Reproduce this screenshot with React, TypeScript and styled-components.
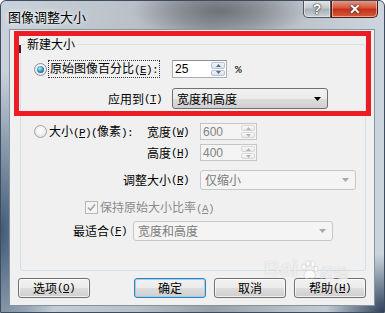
import React from 'react';
import styled, { createGlobalStyle } from 'styled-components';

const Global = createGlobalStyle`
  html, body { margin: 0; padding: 0; background: #fff; }
  body {
    font-family: "Noto Sans CJK SC", "Liberation Sans", sans-serif;
    font-size: 12px;
    color: #000;
  }
`;

const Window = styled.div`
  width: 385px;
  height: 313px;
  box-sizing: border-box;
  display: flex;
  flex-direction: column;
  border: 1px solid #3e4d5e;
  border-radius: 6px 6px 0 0;
  overflow: hidden;
  background:
    radial-gradient(ellipse 90px 26px at 220px 10px, rgba(95, 98, 104, 0.75), transparent),
    radial-gradient(ellipse 60px 160px at 0px 230px, rgba(30, 60, 95, 0.8), transparent),
    radial-gradient(ellipse 60px 60px at 385px 313px, rgba(20, 40, 70, 0.9), transparent),
    linear-gradient(90deg, #c9d2db 0%, #b9c0c8 35%, #9aa0a8 55%, #bcc3ca 78%, #cdd6df 100%);
`;

const TitleBar = styled.div`
  height: 28px;
  display: flex;
  align-items: flex-start;
  padding-left: 7px;
`;

const Title = styled.div`
  padding-top: 7px;
  font-size: 13px;
  line-height: 17px;
  text-shadow: 0 0 6px rgba(255, 255, 255, 0.95), 0 0 3px rgba(255, 255, 255, 0.9);
`;

const Captions = styled.div`
  margin-left: auto;
  margin-right: 6px;
  display: flex;
  margin-top: -1px;
`;

const CaptionButton = styled.div<{ $kind: 'help' | 'close' }>`
  height: 18px;
  width: ${p => (p.$kind === 'close' ? 47 : 28)}px;
  box-sizing: border-box;
  display: flex;
  align-items: center;
  justify-content: center;
  border: 1px solid ${p => (p.$kind === 'close' ? '#5a1a12' : '#4a5560')};
  border-top: none;
  border-radius: ${p => (p.$kind === 'close' ? '0 0 5px 0' : '0 0 0 5px')};
  box-shadow: inset 0 0 0 1px rgba(255, 255, 255, 0.45);
  background: ${p =>
    p.$kind === 'close'
      ? 'linear-gradient(#e8a08e 0%, #d7573c 45%, #c4321a 55%, #d65a3c 100%)'
      : 'linear-gradient(#e6eaee 0%, #c3c9cf 45%, #a8b0b8 55%, #c9d0d6 100%)'};
  color: #fff;
  font-family: "Liberation Sans", sans-serif;
  font-weight: bold;
  font-size: 14px;
  text-shadow: 0 0 2px #222, 0 0 1px #000;
`;

const Client = styled.div`
  flex: 1;
  margin: 0 9px 6px 8px;
  position: relative;
  display: flex;
  flex-direction: column;
  padding: 7px 8px 7px 8px;
  background: #f0f0f0;
  border: 1px solid #86949f;
`;

const Group = styled.fieldset`
  flex: 1;
  margin: 0 0 0 2px;
  padding: 0;
  min-width: 0;
  border: 1px solid #d5dfe5;
  border-radius: 3px;
`;

const Legend = styled.legend`
  margin-left: 4px;
  padding: 0 2px;
  font-size: 12px;
  line-height: 14px;
`;

const Row = styled.div<{ $mt: number; $h: number; $pl?: number }>`
  display: flex;
  align-items: center;
  margin-top: ${p => p.$mt}px;
  height: ${p => p.$h}px;
  padding-left: ${p => p.$pl ?? 0}px;
`;

const LabelCell = styled.div<{ $w: number; $pr: number; $pl?: number }>`
  width: ${p => p.$w}px;
  box-sizing: border-box;
  flex: none;
  display: flex;
  align-items: center;
  justify-content: flex-end;
  padding-right: ${p => p.$pr}px;
  padding-left: ${p => p.$pl ?? 0}px;
  line-height: 14px;
  white-space: nowrap;
`;

const Text = styled.span<{ $disabled?: boolean; $ml?: number }>`
  line-height: 14px;
  white-space: nowrap;
  margin-left: ${p => p.$ml ?? 0}px;
  color: ${p => (p.$disabled ? '#8a8a8a' : '#000')};
`;

const Ascii = styled.span`
  font-family: "Liberation Mono", monospace;
  font-size: 11px;
  letter-spacing: -0.6px;
`;

const Choice = styled.div`
  display: flex;
  align-items: center;
  margin-right: auto;
`;

const Radio = styled.span<{ $checked?: boolean }>`
  width: 13px;
  height: 13px;
  box-sizing: border-box;
  border-radius: 50%;
  flex: none;
  border: 1px solid ${p => (p.$checked ? '#8a8f94' : '#a2a6aa')};
  background: radial-gradient(circle at 50% 40%, #ffffff 0%, #f2f2f2 45%, #d4d6d8 100%);
  display: flex;
  align-items: center;
  justify-content: center;
  &::after {
    content: '';
    display: ${p => (p.$checked ? 'block' : 'none')};
    width: 7px;
    height: 7px;
    border-radius: 50%;
    background: radial-gradient(circle at 40% 35%, #b9ecfb 0%, #3f9cc6 45%, #0d4a6c 100%);
  }
`;

const FocusLabel = styled.span`
  margin-left: 2px;
  padding: 0 1px;
  line-height: 13px;
  outline: 1px dotted #333;
  outline-offset: 0;
  white-space: nowrap;
`;

const SpinBox = styled.div<{ $disabled?: boolean; $w: number; $ml?: number }>`
  width: ${p => p.$w}px;
  height: 100%;
  flex: none;
  box-sizing: border-box;
  margin-left: ${p => p.$ml ?? 0}px;
  display: flex;
  border: 1px solid ${p => (p.$disabled ? '#c3c6c9' : '#abadb3')};
  border-top-color: ${p => (p.$disabled ? '#c3c6c9' : '#8b8e95')};
  background: ${p => (p.$disabled ? '#f4f4f4' : '#fff')};
  color: ${p => (p.$disabled ? '#838383' : '#000')};
`;

const SpinField = styled.div`
  flex: 1;
  display: flex;
  align-items: center;
  padding-left: 2px;
  font-family: "Liberation Sans", sans-serif;
  font-size: 12px;
`;

const SpinButtons = styled.div<{ $disabled?: boolean }>`
  width: 14px;
  display: flex;
  flex-direction: column;
  margin: 1px;
  gap: 1px;
  > span {
    flex: 1;
    display: flex;
    align-items: center;
    justify-content: center;
    border: 1px solid ${p => (p.$disabled ? '#d6d8da' : '#b7c3d0')};
    border-radius: 2px;
    background: ${p =>
      p.$disabled
        ? 'linear-gradient(#fafafa, #e9e9e9)'
        : 'linear-gradient(#f0f6fb, #d5e2ee)'};
  }
`;

const Combo = styled.div<{ $disabled?: boolean; $w: number }>`
  width: ${p => p.$w}px;
  height: 100%;
  flex: none;
  box-sizing: border-box;
  display: flex;
  align-items: center;
  padding: 0 6px 0 4px;
  border-radius: 3px;
  border: 1px solid ${p => (p.$disabled ? '#c5c8cb' : '#707070')};
  background: ${p =>
    p.$disabled
      ? '#f4f4f4'
      : 'linear-gradient(#f2f2f2 0%, #ebebeb 50%, #dddddd 50%, #cfcfcf 100%)'};
  color: ${p => (p.$disabled ? '#7a7a7a' : '#000')};
  line-height: 14px;
  > svg { margin-left: auto; }
`;

const CheckBox = styled.span`
  width: 13px;
  height: 13px;
  box-sizing: border-box;
  flex: none;
  border: 1px solid #b4b6b8;
  background: #f4f4f4;
  display: flex;
  align-items: center;
  justify-content: center;
`;

const ButtonBar = styled.div`
  height: 20px;
  margin-top: 7px;
  display: flex;
  gap: 8px;
`;

const Button = styled.div<{ $default?: boolean; $push?: boolean }>`
  width: 72px;
  box-sizing: border-box;
  display: flex;
  align-items: center;
  justify-content: center;
  margin-right: ${p => (p.$push ? 'auto' : '0')};
  border-radius: 3px;
  border: 1px solid ${p => (p.$default ? '#3c7fb1' : '#707070')};
  box-shadow: ${p =>
    p.$default ? 'inset 0 0 0 1px #8ed3f6' : 'inset 0 0 0 1px rgba(255,255,255,0.7)'};
  background: linear-gradient(#f2f2f2 0%, #ebebeb 50%, #dddddd 50%, #cfcfcf 100%);
  line-height: 14px;
`;

const RedMark = styled.div`
  position: absolute;
  left: 4px;
  top: 1px;
  width: 357px;
  height: 85px;
  box-sizing: border-box;
  border: 5px solid #ec1c24;
  pointer-events: none;
  &::after {
    content: '';
    position: absolute;
    left: 0;
    top: 9px;
    width: 2px;
    height: 8px;
    background: #3a2222;
  }
`;

const Watermark = styled.div`
  position: absolute;
  left: 254px;
  top: 228px;
  display: flex;
  align-items: flex-end;
  gap: 1px;
  color: rgba(255, 255, 255, 0.7);
  text-shadow: 0 0 1px rgba(150, 150, 150, 0.5);
  pointer-events: none;
  > b {
    font-family: "Liberation Sans", sans-serif;
    font-size: 22px;
    line-height: 22px;
  }
  > span {
    font-size: 14px;
    line-height: 16px;
  }
`;

const Arrow = ({ color }: { color: string }) => (
  <svg width="7" height="4" viewBox="0 0 7 4">
    <path d="M0 0H7L3.5 4Z" fill={color} />
  </svg>
);

const Tri = ({ up, color }: { up?: boolean; color: string }) => (
  <svg width="5" height="3" viewBox="0 0 5 3">
    <path d={up ? 'M0 3H5L2.5 0Z' : 'M0 0H5L2.5 3Z'} fill={color} />
  </svg>
);

const Key = ({ k, tail = '' }: { k: string; tail?: string }) => (
  <Ascii>(<u>{k}</u>){tail}</Ascii>
);

const Spin = ({ value, w, ml, disabled }: { value: string; w: number; ml?: number; disabled?: boolean }) => {
  const c = disabled ? '#b5b5b5' : '#5a6c80';
  return (
    <SpinBox $w={w} $ml={ml} $disabled={disabled}>
      <SpinField>{value}</SpinField>
      <SpinButtons $disabled={disabled}>
        <span><Tri up color={c} /></span>
        <span><Tri color={c} /></span>
      </SpinButtons>
    </SpinBox>
  );
};

const Paw = () => (
  <svg width="20" height="20" viewBox="0 0 20 20" fill="rgba(255,255,255,0.75)" stroke="rgba(160,160,160,0.5)" strokeWidth="0.6">
    <ellipse cx="5" cy="7" rx="2.2" ry="3" />
    <ellipse cx="9" cy="3.5" rx="2.2" ry="3" />
    <ellipse cx="14" cy="4" rx="2.2" ry="3" />
    <ellipse cx="17" cy="9" rx="2" ry="2.7" />
    <path d="M5 16c0-4 3-6 6-6s6 3 5 7c-1 2-4 1-5 1s-6 2-6-2z" />
  </svg>
);

export default function App() {
  return (
    <>
      <Global />
      <Window>
        <TitleBar>
          <Title>图像调整大小</Title>
          <Captions>
            <CaptionButton $kind="help">?</CaptionButton>
            <CaptionButton $kind="close">✕</CaptionButton>
          </Captions>
        </TitleBar>
        <Client>
          <Group>
            <Legend>新建大小</Legend>
            <Row $mt={9} $h={18} $pl={13}>
              <Radio $checked />
              <FocusLabel>原始图像百分比<Key k="E" tail=":" /></FocusLabel>
              <Spin value="25" w={55} ml={13} />
              <Text $ml={8}><Ascii>%</Ascii></Text>
            </Row>
            <Row $mt={10} $h={21}>
              <LabelCell $w={151} $pr={10}>应用到<Key k="T" /></LabelCell>
              <Combo $w={156}>
                宽度和高度
                <Arrow color="#000" />
              </Combo>
            </Row>
            <Row $mt={14} $h={17}>
              <LabelCell $w={179} $pr={11} $pl={13}>
                <Choice>
                  <Radio />
                  <Text $ml={2}>大小<Key k="P" /><Ascii>(</Ascii>像素<Ascii>):</Ascii></Text>
                </Choice>
                宽度<Key k="W" />
              </LabelCell>
              <Spin value="600" w={57} disabled />
            </Row>
            <Row $mt={4} $h={17}>
              <LabelCell $w={179} $pr={11}>高度<Key k="H" /></LabelCell>
              <Spin value="400" w={57} disabled />
            </Row>
            <Row $mt={9} $h={20}>
              <LabelCell $w={179} $pr={11}>调整大小<Key k="R" /></LabelCell>
              <Combo $w={156} $disabled>
                仅缩小
                <Arrow color="#a9a9a9" />
              </Combo>
            </Row>
            <Row $mt={11} $h={13} $pl={64}>
              <CheckBox>
                <svg width="9" height="9" viewBox="0 0 9 9">
                  <path d="M1 4.5L3.5 7L8 1.5" fill="none" stroke="#a3a3a3" strokeWidth="1.6" />
                </svg>
              </CheckBox>
              <Text $ml={2} $disabled>保持原始大小比率<Key k="A" /></Text>
            </Row>
            <Row $mt={7} $h={20}>
              <LabelCell $w={112} $pr={6}>最适合<Key k="F" /></LabelCell>
              <Combo $w={200} $disabled>
                宽度和高度
                <Arrow color="#a9a9a9" />
              </Combo>
            </Row>
          </Group>
          <ButtonBar>
            <Button $push>选项<Key k="O" /></Button>
            <Button $default>确定</Button>
            <Button>取消</Button>
            <Button>帮助<Key k="H" /></Button>
          </ButtonBar>
          <RedMark />
          <Watermark>
            <b>Bai</b>
            <Paw />
            <span>经验</span>
          </Watermark>
        </Client>
      </Window>
    </>
  );
}
